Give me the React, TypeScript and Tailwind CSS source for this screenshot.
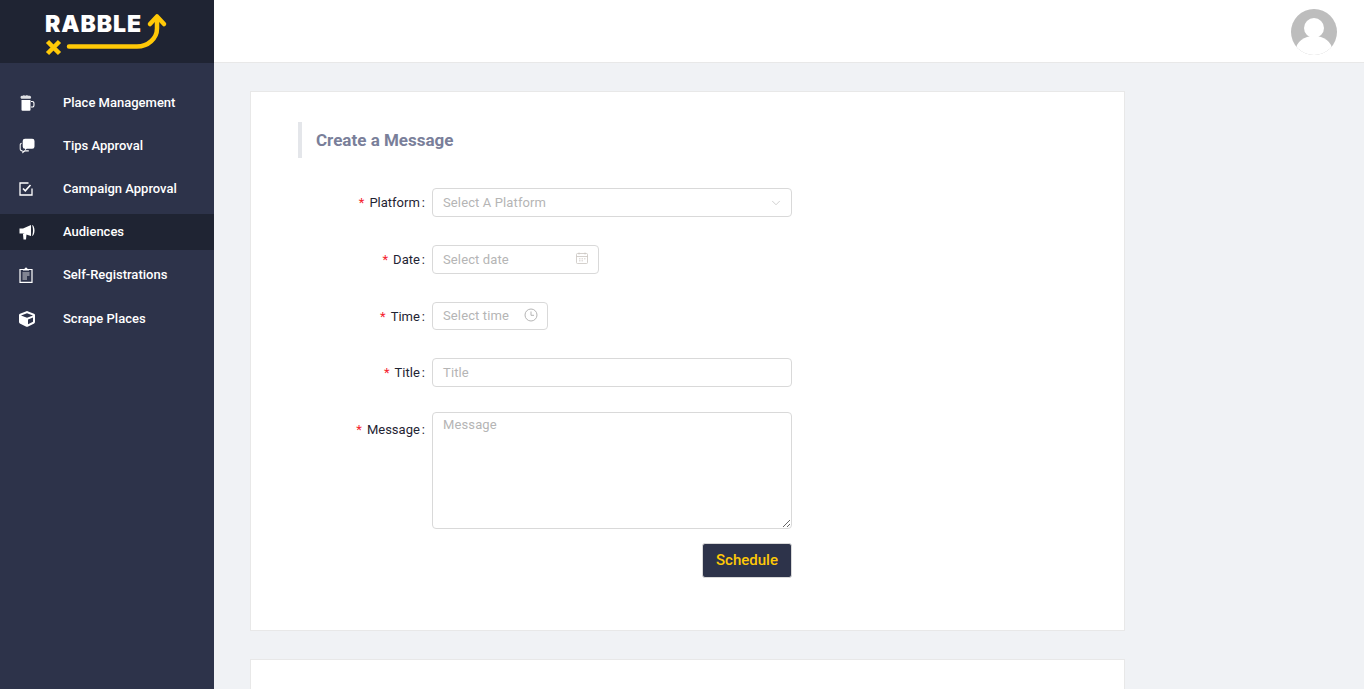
import { ChevronDown } from 'lucide-react'
import { FaCube } from 'react-icons/fa'

function MugIcon() {
  return (
    <svg viewBox="0 0 16 16" className="h-4 w-4" fill="white">
      <path d="M2 3.600C.9 2.500 1.700.6 3.200.9 4 0 5.600 0 6.400.7c1-.6 2.400-.6 3.200.1 1.300-.3 2.700.4 2.500 1.700-.1.800-.7 1.300-1.300 1.300H3.200C2.700 3.800 2.300 3.800 2 3.600z" fillOpacity="0.85" />
      <path d="M2.500 5h9v9.700a1 1 0 0 1-1 1h-7a1 1 0 0 1-1-1z" />
      <path d="M12 6h1.200c1.400 0 2.300.9 2.300 2.200v2.100c0 1.400-.9 2.300-2.300 2.300H12v-1h1c.8 0 1.400-.6 1.400-1.400V8.300c0-.7-.6-1.300-1.400-1.300h-1z" />
    </svg>
  )
}

function BubblesIcon() {
  return (
    <svg viewBox="0 0 16 16" className="h-4 w-4" fill="white">
      <path d="M6 .8h7.200A2.300 2.300 0 0 1 15.500 3.100v5.400a2.300 2.300 0 0 1-2.300 2.300H7.800L6 12.300v-1.600A2.300 2.300 0 0 1 3.700 8.400V3.100A2.300 2.300 0 0 1 6 .8z" />
      <path d="M2.600 4.800v1.200c-.5.100-.9.500-.9 1v4c0 .7.500 1.200 1.200 1.200h.7v1.300l1.700-1.300h4.500v1.200H6L3.300 15.500v-2.100C1.900 13.300.7 12.300.7 11V7c0-1.200.8-2.100 1.900-2.200z" />
    </svg>
  )
}

function CheckBoxIcon() {
  return (
    <svg viewBox="0 0 14 14" className="h-[14px] w-[14px]" fill="none" stroke="white">
      <path d="M9.500 1H1v12h12V6.500" strokeWidth="1.300" />
      <path d="M4 6.500l2.300 2.300L11.500 3" strokeWidth="1.600" />
    </svg>
  )
}

function MegaphoneIcon() {
  return (
    <svg viewBox="0 0 16 16" className="h-4 w-4" fill="white">
      <path d="M.5 4.500H4L12 1v11L4 9.500H.5z" />
      <path d="M13 1c1.500.3 2.500 2.700 2.500 5.400S14.500 11.700 13 12c.4-.8 1-3 1-5.600S13.400 1.800 13 1z" />
      <path d="M4 10h3.500L7 15.500H4.500z" />
    </svg>
  )
}

function ClipboardIcon() {
  return (
    <svg viewBox="0 0 14 16" className="h-4 w-[14px]" fill="none" stroke="white">
      <path d="M4 2.500H1v12.800h12V2.500h-3" strokeWidth="1.200" />
      <path d="M4 3.500V2h1.500a1.500 1.500 0 0 1 3 0H10v1.500z" fill="white" stroke="none" />
      <path d="M3.500 6h7M3.500 8h7M3.500 10h4.500M3.500 12h4.500" strokeWidth="1" strokeOpacity="0.8" />
    </svg>
  )
}

const MENU = [
  { label: 'Place Management', icon: <MugIcon /> },
  { label: 'Tips Approval', icon: <BubblesIcon /> },
  { label: 'Campaign Approval', icon: <CheckBoxIcon /> },
  { label: 'Audiences', icon: <MegaphoneIcon />, active: true },
  { label: 'Self-Registrations', icon: <ClipboardIcon /> },
  { label: 'Scrape Places', icon: <FaCube className="h-4 w-4 text-white" />, nudge: true },
]

function Logo() {
  return (
    <div className="relative h-[63px] w-full bg-[#1f2433]">
      <span className="absolute left-[45px] top-[10px] font-['Inter',sans-serif] text-[23px] font-black leading-[28px] tracking-[0.9px] text-white">
        RABBLE
      </span>
      <svg viewBox="0 0 130 50" className="absolute left-[40px] top-[8px] h-[50px] w-[130px]" fill="none">
        <path d="M7.500 33.500l12 12M19.500 33.500l-12 12" stroke="#ffc907" strokeWidth="4.500" />
        <path
          d="M29 38.500h68c11 0 20-8 20-18V10"
          stroke="#ffc907"
          strokeWidth="4.500"
          strokeLinecap="round"
        />
        <path d="M110 16l7-7.500 7 7.500" stroke="#ffc907" strokeWidth="4.500" strokeLinecap="round" strokeLinejoin="round" />
      </svg>
    </div>
  )
}

function Avatar() {
  return (
    <svg viewBox="0 0 46 46" className="h-[46px] w-[46px]">
      <defs>
        <clipPath id="avatar-clip">
          <circle cx="23" cy="23" r="23" />
        </clipPath>
      </defs>
      <g clipPath="url(#avatar-clip)">
        <rect width="46" height="46" fill="#bdbdbd" />
        <circle cx="23" cy="19" r="10" fill="white" />
        <ellipse cx="23" cy="41" rx="18" ry="14" fill="white" />
      </g>
    </svg>
  )
}

function Label({ text, className = '' }: { text: string; className?: string }) {
  return (
    <div className={`flex h-[29px] w-[127px] shrink-0 items-center justify-end whitespace-nowrap text-[13px] text-[#1f2433] ${className}`}>
      <span className="mr-[5px] text-[#f5222d]">*</span>
      <span>{text}</span>
      <span className="ml-[2px]">:</span>
    </div>
  )
}

function CalendarIcon() {
  return (
    <svg viewBox="0 0 12 12" className="mb-[3px] h-[12px] w-[12px]" fill="none" stroke="#c9c4bf" strokeWidth="0.8">
      <rect x="0.500" y="1.500" width="11" height="10" rx="1" />
      <path d="M0.500 4.500h11M3 0.500v2M9 0.500v2M3 6.800h1.500M5.500 6.800h1.500M8 6.800h1.500M3 8.800h1.500M5.500 8.800h1.500" />
    </svg>
  )
}

function ClockIcon() {
  return (
    <svg viewBox="0 0 14 14" className="mb-[2px] h-[14px] w-[14px]" fill="none" stroke="#b5b5b5" strokeWidth="1">
      <circle cx="7" cy="7" r="6" />
      <path d="M7 3.500V7.300h3" />
    </svg>
  )
}

export default function App() {
  const field = 'rounded-[4px] border border-[#d9d9d9] bg-white text-[13px] tracking-[0.12px] text-[#b5b5b5]'

  return (
    <div className="flex h-[689px] w-[1364px] overflow-hidden bg-[#f0f2f5] font-['Roboto',sans-serif]">
      <aside className="h-full w-[214px] shrink-0 bg-[#2d334a]">
        <Logo />
        <nav className="flex flex-col gap-[7px] pt-[22px]">
          {MENU.map((item) => (
            <div
              key={item.label}
              className={`flex h-[36px] items-center text-[13px] font-medium text-white ${item.active ? 'bg-[#1f2433]' : ''} ${item.nudge ? 'mt-px' : ''}`}
            >
              <span className="flex w-[63px] shrink-0 justify-start pl-[19px]">{item.icon}</span>
              <span>{item.label}</span>
            </div>
          ))}
        </nav>
      </aside>

      <div className="min-w-0 flex-1">
        <header className="flex h-[63px] items-start justify-end border-b border-[#e8e8e8] bg-white pr-[27px] pt-[9px]">
          <Avatar />
        </header>

        <main className="pl-[36px] pt-[28px]">
          <section className="h-[540px] w-[875px] border border-[#e8e8e8] bg-white pl-[47px] pt-[30px]">
            <h2 className="flex h-[36px] items-center border-l-4 border-[#e4e6ea] pl-[14px] pt-[2px] text-[17px] font-bold text-[#7a7f9a]">
              Create a Message
            </h2>

            <form className="mt-[30px]">
              <div className="mb-[28px] flex gap-[7px]">
                <Label text="Platform" />
                <div className={`${field} flex h-[29px] w-[360px] items-center justify-between pl-[10px] pr-[8px]`}>
                  <span>Select A Platform</span>
                  <ChevronDown className="h-[14px] w-[14px] text-[#bfbfbf]" strokeWidth={1.25} />
                </div>
              </div>

              <div className="mb-[28px] flex gap-[7px]">
                <Label text="Date" />
                <div className={`${field} flex h-[29px] w-[167px] items-center justify-between pl-[10px] pr-[10px]`}>
                  <span>Select date</span>
                  <CalendarIcon />
                </div>
              </div>

              <div className="mb-[27px] flex gap-[7px]">
                <Label text="Time" />
                <div className={`${field} flex h-[28px] w-[116px] items-center justify-between pl-[10px] pr-[9px]`}>
                  <span>Select time</span>
                  <ClockIcon />
                </div>
              </div>

              <div className="mb-[25px] flex gap-[7px]">
                <Label text="Title" />
                <div className={`${field} flex h-[29px] w-[360px] items-center pl-[10px]`}>Title</div>
              </div>

              <div className="flex gap-[7px]">
                <Label text="Message" className="mt-[3px]" />
                <div className="w-[360px]">
                  <textarea
                    readOnly
                    placeholder="Message"
                    className="block h-[117px] w-[360px] rounded-[4px] border border-[#d9d9d9] bg-white px-[10px] py-[4px] text-[13px] leading-[16px] tracking-[0.12px] outline-none placeholder:text-[#b5b5b5]"
                  />
                  <div className="mt-[14px] flex justify-end">
                    <button
                      type="button"
                      className="h-[35px] w-[90px] rounded-[3px] border border-[#d9d9d9] bg-[#2d334a] text-[15px] font-medium text-[#ffc907]"
                    >
                      Schedule
                    </button>
                  </div>
                </div>
              </div>
            </form>
          </section>

          <section className="mt-[28px] h-[100px] w-[875px] border border-[#e8e8e8] bg-white" />
        </main>
      </div>
    </div>
  )
}
